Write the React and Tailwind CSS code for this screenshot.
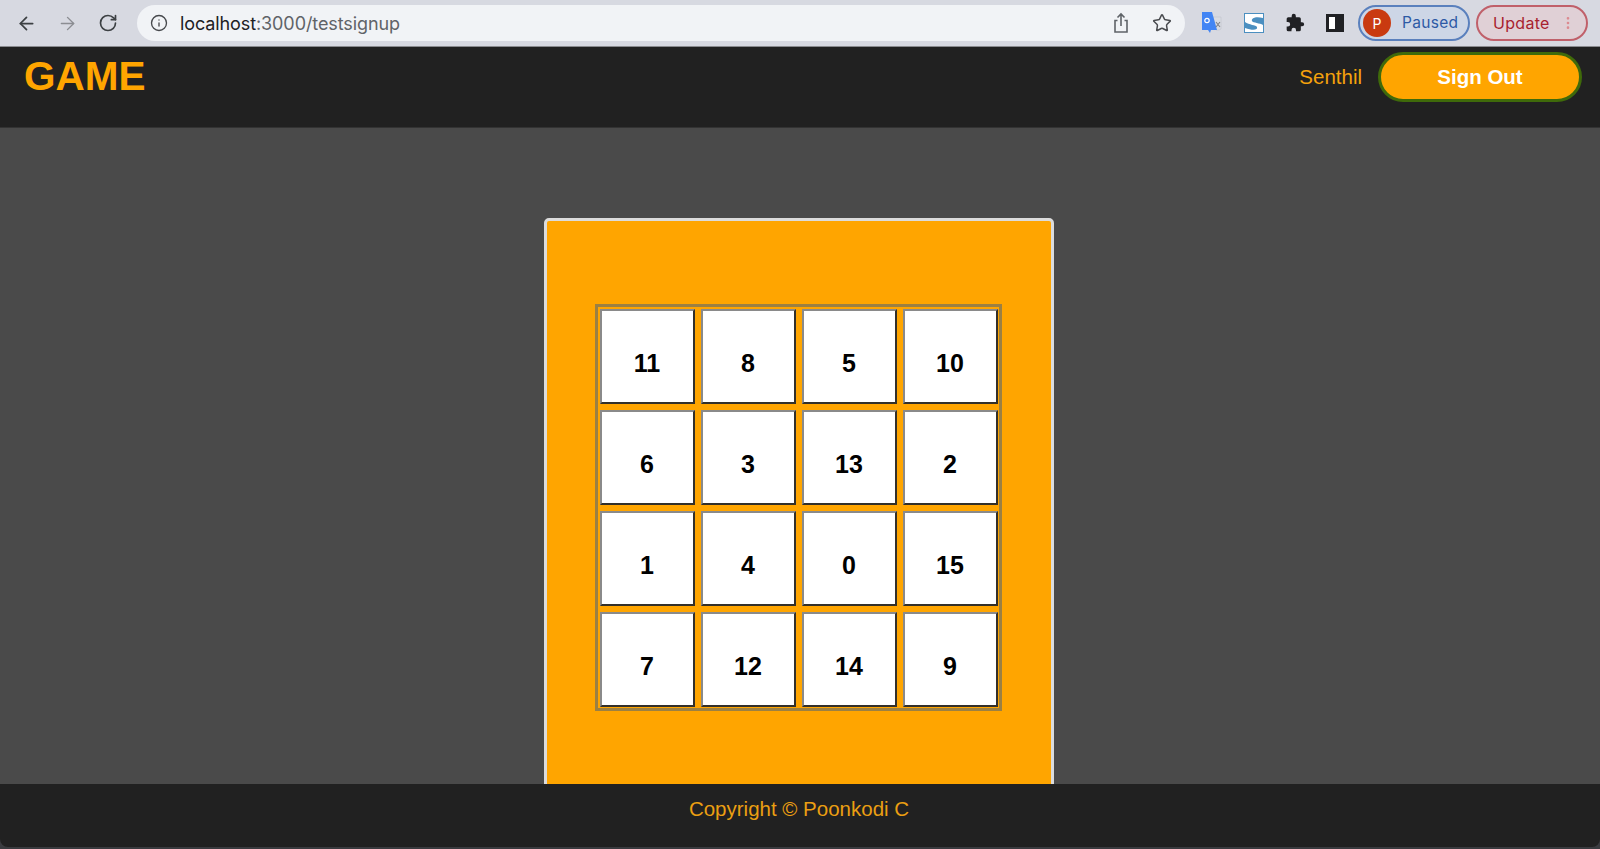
import React from 'react';
import { ArrowLeft, ArrowRight, RotateCw, Info, Star, MoreVertical } from 'lucide-react';

// 15-puzzle page inside a Chrome window frame.
const TILES = [11, 8, 5, 10, 6, 3, 13, 2, 1, 4, 0, 15, 7, 12, 14, 9];

function ShareIcon() {
  return (
    <svg width="20" height="22" viewBox="0 0 20 22" fill="none" stroke="#5f6368" strokeWidth="1.6">
      <path d="M6.5 8.5H4v11.5h12V8.5h-2.500" />
      <path d="M10 14V2.500M6.500 5.500 10 2l3.500 3.500" />
    </svg>
  );
}

function TranslateIcon() {
  return (
    <svg width="22" height="24" viewBox="0 0 22 24">
      <path d="M12 6h8v12l-2 1h-3z" fill="#d9dbe2" stroke="#b8bcc6" strokeWidth="0.5" />
      <path d="M1 1h10l5 18h-6l-1 3-2-3H1z" fill="#4285f4" />
      <circle cx="6" cy="9.500" r="2.200" fill="none" stroke="#ffffff" strokeWidth="1.200" />
      <path d="m15 11 4 5m0-5-4 5" stroke="#7d8088" strokeWidth="1.100" />
    </svg>
  );
}

function SiteIcon() {
  return (
    <svg width="20" height="20" viewBox="0 0 20 20">
      <rect width="20" height="20" fill="#4b8fc0" />
      <path d="M1 1h18v4C12 3 7 5 8 8c1 2 8 2 11 4v7H1v-4c8 3 13 2 12-1-1-2-8-2-12-5z" fill="#ffffff" />
    </svg>
  );
}

function PuzzleIcon() {
  return (
    <svg width="20" height="20" viewBox="0 0 24 24" fill="#202124">
      <path d="M20.500 11H19V7a2 2 0 0 0-2-2h-4V3.500a2.500 2.500 0 0 0-5 0V5H4a2 2 0 0 0-2 2v3.800h1.500a2.700 2.700 0 0 1 0 5.400H2V20a2 2 0 0 0 2 2h3.800v-1.500a2.700 2.700 0 0 1 5.400 0V22H17a2 2 0 0 0 2-2v-4h1.500a2.500 2.500 0 0 0 0-5z" />
    </svg>
  );
}

function BrowserBar() {
  return (
    <div className="flex h-[47px] shrink-0 items-center bg-[#d7d9e1] border-b border-[#8a8b8f] pl-[16px] pr-[11px]">
      <ArrowLeft size={21} strokeWidth={2} color="#3c4043" />
      <ArrowRight size={21} strokeWidth={1.6} color="#8b8d92" className="ml-[20px]" />
      <RotateCw size={20} strokeWidth={2} color="#3c4043" className="ml-[20px]" />
      <div className="ml-[19px] flex h-[36px] w-[1048px] items-center rounded-full bg-[#f1f3f6] pl-[13px] pr-[13px]">
        <Info size={18} strokeWidth={1.8} color="#46484c" />
        <div className="ml-[12px] flex-1 text-[18px] text-[#202124] font-['Inter',sans-serif] tracking-[-0.1px]">
          localhost<span className="text-[#5f6368]">:3000/testsignup</span>
        </div>
        <ShareIcon />
        <Star size={20} strokeWidth={1.8} color="#4a4c50" className="ml-[21px]" />
      </div>
      <div className="ml-[16px] flex w-[22px] justify-center"><TranslateIcon /></div>
      <div className="ml-[21px]"><SiteIcon /></div>
      <div className="ml-[21px]"><PuzzleIcon /></div>
      <div className="ml-[21px] flex h-[18px] w-[18px] border-[3px] border-[#202124] bg-[#202124]">
        <div className="w-[6px] bg-white" />
      </div>
      <div className="ml-[14px] flex h-[36px] w-[112px] items-center rounded-full border-2 border-[#5a80bd] bg-[#cdd6e6] pl-[3px]">
        <div className="flex h-[28px] w-[28px] items-center justify-center rounded-full bg-[#c93a10] text-[14px] text-white font-['Inter',sans-serif]">P</div>
        <span className="ml-[11px] text-[15.5px] tracking-[0.3px] text-[#2d5aa5] font-['Inter',sans-serif]">Paused</span>
      </div>
      <div className="ml-[6px] flex h-[36px] w-[112px] items-center rounded-full border-2 border-[#c0606a] bg-[#e0d0d6] pl-[15px]">
        <span className="text-[16px] tracking-[0.3px] text-[#a8222f] font-['Inter',sans-serif]">Update</span>
        <MoreVertical size={16} color="#dc8a90" className="ml-[10px]" />
      </div>
    </div>
  );
}

export default function App() {
  return (
    <div className="flex h-[849px] flex-col overflow-hidden bg-[#3a3b3f] pb-[2px] font-['Liberation_Sans',Arial,sans-serif]">
      <BrowserBar />

      <header className="flex h-[81px] shrink-0 items-start justify-between bg-[#212121] pl-[24px] pr-[18px] border-b border-[#333333]">
        <h1 className="mt-[6px] text-[40.5px] leading-[46px] font-bold text-[#ffa500]">GAME</h1>
        <div className="mt-[5px] flex items-center">
          <span className="text-[20.5px] text-[#f5a20c]">Senthil</span>
          <button className="ml-[16px] h-[50px] w-[204px] rounded-full border-[3px] border-[#3f6a0a] bg-[#ffa500] text-[20.5px] font-bold text-white">
            Sign Out
          </button>
        </div>
      </header>

      <main className="flex flex-1 justify-center overflow-hidden bg-[#4a4a4a] pt-[90px] pr-[2px]">
        <div className="h-[600px] w-[510px] shrink-0 rounded-[5px] border-[3px] border-[#dcdcdc] bg-[#ffa500] pt-[83px] pl-[48px]">
          <div className="grid h-[407px] w-[407px] grid-cols-[repeat(4,95px)] grid-rows-[repeat(4,95px)] content-center justify-center gap-[6px] border-[3px] border-[#9b8043]">
            {TILES.map((n) => (
              <div
                key={n}
                className="flex items-center justify-center border-2 border-t-[#8a8a8a] border-l-[#8a8a8a] border-r-[#33302a] border-b-[#33302a] bg-white pt-[16px] text-[25px] font-bold text-black"
              >
                {n}
              </div>
            ))}
          </div>
        </div>
      </main>

      <footer className="flex h-[63px] shrink-0 justify-center rounded-b-[8px] bg-[#212121] pt-[13px] pr-[2px] text-[20.5px] leading-[24px] text-[#eb9f12]">
        Copyright © Poonkodi C
      </footer>
    </div>
  );
}
